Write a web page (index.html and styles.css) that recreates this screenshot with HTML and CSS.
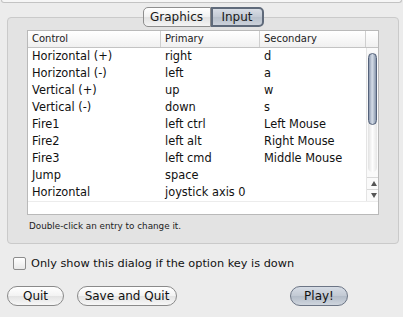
FILE: index.html
```html
<!DOCTYPE html>
<html lang="en">
<head>
    <meta charset="UTF-8">
    <meta name="viewport" content="width=device-width, initial-scale=1.0">
    <title>Input Settings</title>
    <link rel="stylesheet" href="styles.css">
</head>
<body>
    <div class="preview"></div>
    <div class="group">
        <div class="segmented">
            <button type="button" class="seg">Graphics</button>
            <button type="button" class="seg selected">Input</button>
        </div>
        <div class="table">
            <div class="head">
                <div class="th">Control</div>
                <div class="th">Primary</div>
                <div class="th">Secondary</div>
                <div class="th"></div>
            </div>
            <div class="body">
                <div class="rows" id="rows"></div>
                <div class="scroller">
                    <div class="track">
                        <div class="thumb"></div>
                    </div>
                    <div class="arrow up"></div>
                    <div class="arrow down"></div>
                </div>
            </div>
            <div class="foot"></div>
        </div>
        <p class="hint">Double-click an entry to change it.</p>
    </div>
    <label class="check">
        <span class="box"></span>
        Only show this dialog if the option key is down
    </label>
    <div class="buttons">
        <button type="button" class="pill quit">Quit</button>
        <button type="button" class="pill save">Save and Quit</button>
        <button type="button" class="pill play">Play!</button>
    </div>
    <script>
        // Mapeamento dos controles
        const bindings = [
            ["Horizontal (+)", "right", "d"],
            ["Horizontal (-)", "left", "a"],
            ["Vertical (+)", "up", "w"],
            ["Vertical (-)", "down", "s"],
            ["Fire1", "left ctrl", "Left Mouse"],
            ["Fire2", "left alt", "Right Mouse"],
            ["Fire3", "left cmd", "Middle Mouse"],
            ["Jump", "space", ""],
            ["Horizontal", "joystick axis 0", ""]
        ];

        const rows = document.getElementById("rows");
        bindings.forEach(b => {
            const row = document.createElement("div");
            row.classList.add("row");
            row.innerHTML = `<span>${b[0]}</span><span>${b[1]}</span><span>${b[2]}</span>`;
            rows.appendChild(row);
        });
    </script>
</body>
</html>
```

FILE: styles.css
```css
body {
    margin: 0;
    padding: 0;
    width: 403px;
    height: 317px;
    overflow: hidden;
    background-color: #ececec;
    font-family: "DejaVu Sans", Verdana, sans-serif;
    color: #111;
}

.preview {
    height: 2px;
    margin: 0 1px;
    background: #f6f6f6;
    border: 1px solid #c3c3c3;
    border-top: none;
    border-radius: 0 0 4px 4px;
}

.group {
    height: 225px;
    margin: 14px 4px 0 7px;
    padding: 0 19px;
    background: #e3e3e3;
    border: 1px solid #cacaca;
    border-radius: 4px;
}

.segmented {
    display: flex;
    justify-content: center;
    margin-top: -11px;
}

.seg {
    height: 20px;
    padding: 0;
    font-family: inherit;
    font-size: 12px;
    color: #1a1a1a;
    background: linear-gradient(#ffffff, #f1f1f1 50%, #e2e2e2 51%, #f4f4f4);
    border: 1px solid #8e8e8e;
    cursor: pointer;
}

.seg:first-child {
    width: 68px;
    border-radius: 5px 0 0 5px;
}

.seg.selected {
    width: 53px;
    border-radius: 0 5px 5px 0;
    border: 2px solid #5f6a7a;
    background: linear-gradient(#d8dde5, #c3cad4 50%, #b7bfca 51%, #ccd2db);
}

.table {
    margin-top: 3px;
    background: #fff;
    border: 1px solid #b9b9b9;
}

.head {
    display: grid;
    grid-template-columns: 133px 99px 106px 1fr;
    height: 16px;
    background: linear-gradient(#ffffff, #f0f0f0);
    border-bottom: 1px solid #c3c3c3;
}

.th {
    font-size: 10px;
    line-height: 16px;
    padding-left: 4px;
    color: #222;
    border-right: 1px solid #cfcfcf;
}

.th:last-child {
    border-right: none;
}

.body {
    display: flex;
    height: 153px;
}

.rows {
    width: 338px;
}

.row {
    display: grid;
    grid-template-columns: 133px 99px 106px;
    height: 17px;
    line-height: 17px;
    font-size: 11.4px;
}

.row span {
    padding-left: 4px;
    white-space: nowrap;
}

.scroller {
    width: 14px;
    display: flex;
    flex-direction: column;
    background: #fafafa;
    border-left: 1px solid #e4e4e4;
}

.track {
    height: 121px;
    margin: 4px 1px 0;
    background: linear-gradient(90deg, #e2e2e2, #fdfdfd 50%, #e6e6e6);
    border-radius: 6px;
}

.thumb {
    height: 70px;
    margin-top: 1px;
    background: linear-gradient(90deg, #8d9ab0, #d4dce7 45%, #c2ccd9 60%, #8694aa);
    border: 1px solid #54627a;
    border-radius: 6px;
}

.arrow {
    position: relative;
    height: 11px;
    border-top: 1px solid #d8d8d8;
}

.arrow.up {
    margin-top: 5px;
}

.arrow::after {
    content: "";
    position: absolute;
    left: 4px;
    top: 3px;
    border-left: 3px solid transparent;
    border-right: 3px solid transparent;
}

.arrow.up::after {
    border-bottom: 5px solid #555;
}

.arrow.down::after {
    border-top: 5px solid #555;
}

.foot {
    height: 12px;
    border-top: 1px solid #ececec;
}

.hint {
    margin: 6px 0 0 2px;
    font-size: 8.8px;
    color: #222;
}

.check {
    display: flex;
    align-items: center;
    gap: 5px;
    margin: 13px 0 0 13px;
    font-size: 11.3px;
    color: #111;
}

.box {
    width: 11px;
    height: 11px;
    border: 1px solid #8c8c8c;
    border-radius: 2px;
    background: linear-gradient(#ffffff, #e9e9e9);
}

.buttons {
    display: flex;
    margin: 16px 0 0 7px;
}

.pill {
    height: 20px;
    padding: 0;
    font-family: inherit;
    font-size: 12px;
    color: #111;
    background: linear-gradient(#ffffff, #f2f2f2 50%, #e3e3e3 51%, #f7f7f7);
    border: 1px solid #8a8a8a;
    border-radius: 10px;
    cursor: pointer;
}

.quit {
    width: 57px;
}

.save {
    width: 100px;
    margin-left: 13px;
}

.play {
    width: 58px;
    margin-left: 113px;
    background: linear-gradient(#d6dce5, #c2c9d3 50%, #b3bcc8 51%, #cfd5de);
    border-color: #6c7585;
}
```
